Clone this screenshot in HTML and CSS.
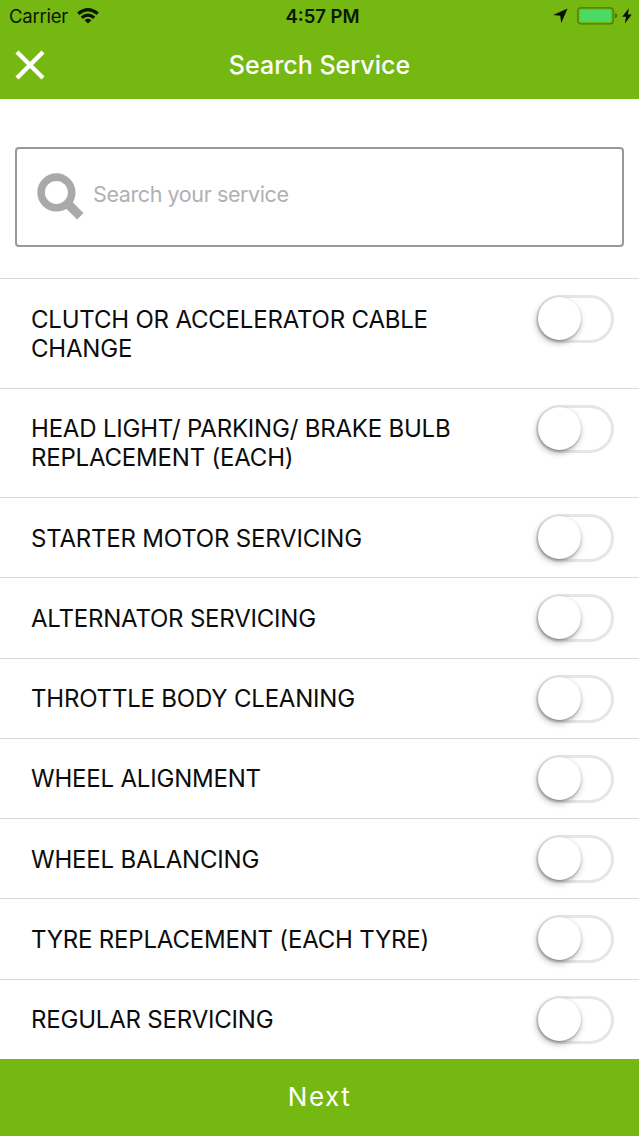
FILE: index.html
```
<!DOCTYPE html>
<html lang="en">
	<head>
		<meta charset="utf-8" />
		<meta name="viewport" content="width=device-width, initial-scale=1.0" />
		<title>Search Service</title>

		<link rel="stylesheet" href="styles.css">
	</head>

	<body>
		<header class="top">
			<div class="status">
				<div class="status-left">
					<span class="carrier">Carrier</span>
					<svg class="wifi" width="22" height="16" viewBox="0 0 22 16">
						<g fill="none" stroke="#0b1600" stroke-width="3.2">
							<path d="M1.2 5.8 Q11 -2.4 20.8 5.8" />
							<path d="M4.8 9.7 Q11 4.5 17.2 9.7" />
						</g>
						<path fill="#0b1600" d="M7.6 12.2 Q11 9.3 14.4 12.2 L11 15.6 Z" />
					</svg>
				</div>
				<span class="time">4:57 PM</span>
				<div class="status-right">
					<svg width="15" height="16" viewBox="0 0 15 16">
						<path fill="#081000" d="M14.6 .6 L8.2 15 L7.3 7.8 L.2 7 Z" />
					</svg>
					<svg class="battery" width="41" height="18" viewBox="0 0 41 18">
						<rect x=".8" y=".8" width="35.4" height="16" rx="3" fill="none" stroke="#49770c" stroke-width="1.2" />
						<rect x="2.8" y="2.8" width="31.4" height="12" rx="1" fill="#4cd964" />
						<path fill="#49770c" d="M37.8 6 Q40.4 6.6 40.4 8.8 T37.8 11.6 Z" />
					</svg>
					<svg class="bolt" width="10" height="16" viewBox="0 0 10 16">
						<path fill="#081000" d="M6.8 .2 L.2 8.8 H4.1 L2.8 15.6 L9.8 6.4 H6 Z" />
					</svg>
				</div>
			</div>

			<div class="titlebar">
				<svg class="close" width="30" height="30" viewBox="0 0 30 30">
					<path d="M2 2 L28 28 M28 2 L2 28" stroke="#fff" stroke-width="4.4" />
				</svg>
				<h1>Search Service</h1>
			</div>
		</header>

		<div class="search">
			<svg class="glass" width="47" height="47" viewBox="0 0 47 47">
				<circle cx="19.4" cy="19.4" r="15.3" fill="none" stroke="#a9a9a9" stroke-width="7.6" />
				<path d="M29 29 L43.3 43.3" stroke="#a9a9a9" stroke-width="9" />
			</svg>
			<span class="placeholder">Search your service</span>
		</div>

		<ul class="services">
			<li><span class="name">CLUTCH OR ACCELERATOR CABLE CHANGE</span><span class="switch"></span></li>
			<li><span class="name">HEAD LIGHT/ PARKING/ BRAKE BULB REPLACEMENT (EACH)</span><span class="switch"></span></li>
			<li><span class="name">STARTER MOTOR SERVICING</span><span class="switch"></span></li>
			<li><span class="name">ALTERNATOR SERVICING</span><span class="switch"></span></li>
			<li><span class="name">THROTTLE BODY CLEANING</span><span class="switch"></span></li>
			<li><span class="name">WHEEL ALIGNMENT</span><span class="switch"></span></li>
			<li><span class="name">WHEEL BALANCING</span><span class="switch"></span></li>
			<li><span class="name">TYRE REPLACEMENT (EACH TYRE)</span><span class="switch"></span></li>
			<li><span class="name">REGULAR SERVICING</span><span class="switch"></span></li>
		</ul>

		<footer class="next">Next</footer>
	</body>
</html>
```
FILE: styles.css
```
* {
	box-sizing: border-box;
}

body {
	margin: 0;
	height: 1136px;
	display: flex;
	flex-direction: column;
	overflow: hidden;

	background: #fff;
	color: #0c0c0c;
	font-family: Inter, "Liberation Sans", sans-serif;
}

svg {
	display: block;
	flex: none;
}



/**
 * Green header with the status bar and the title
 */
.top {
	flex: none;
	height: 98.5px;
	background: #74b811;
}

.status {
	display: grid;
	grid-template-columns: 1fr auto 1fr;
	height: 32px;
	padding: 0 7px 0 9px;
	align-items: center;

	color: #0b1600;
	font-size: 18.5px;
}

.status-left,
.status-right {
	display: flex;
	align-items: center;
}

.status-right {
	justify-content: flex-end;
}

.carrier {
	letter-spacing: -.25px;
}

.wifi {
	margin-left: 9px;
	margin-top: -1px;
}

.time {
	padding-left: 4px;
	font-weight: 600;
}

.battery {
	margin-left: 9px;
}

.bolt {
	margin-left: 4px;
}

.titlebar {
	display: grid;
	grid-template-columns: 30px 1fr 30px;
	height: 66px;
	padding: 0 15px;
	align-items: center;
}

.titlebar h1 {
	margin: 0;
	color: #fff;
	font-size: 25px;
	font-weight: 500;
	text-align: center;
}



/**
 * Search box
 */
.search {
	flex: none;
	display: flex;
	align-items: center;
	height: 100px;
	margin: 48.5px 15px 31px;
	padding: 0 20px;

	border: 2px solid #98999c;
	border-radius: 4px;
}

.glass {
	margin-top: -2px;
}

.placeholder {
	margin: -7px 0 0 9px;
	color: #b0b0b3;
	font-size: 21.5px;
	font-weight: 400;
	letter-spacing: -.4px;
}



/**
 * List of services, each with its switch
 */
.services {
	flex: 1;
	min-height: 0;
	margin: 0;
	padding: 0;
	overflow: hidden;
	list-style: none;
}

.services li {
	display: flex;
	justify-content: space-between;
	padding: 25.5px 25px 24.5px 31px;
	border-top: 1px solid #d9d9dc;
}

.name {
	width: 440px;
	font-size: 24px;
	letter-spacing: -.2px;
	line-height: 29.25px;
}

.switch {
	flex: none;
	width: 78px;
	height: 48px;
	margin: -9.5px 0;
	padding: 2px;

	border: 3px solid #e6e6e8;
	border-radius: 24px;
}

.switch::before {
	content: "";
	display: block;
	width: 43px;
	height: 43px;
	margin: -3px 0 0 -3px;

	border-radius: 50%;
	background: #fff;
	box-shadow: -1px 3px 6px rgba(0, 0, 0, .3), 0 1px 2px rgba(0, 0, 0, .25);
}



.next {
	flex: none;
	height: 77px;
	background: #74b811;
	color: #fff;
	font-size: 26px;
	letter-spacing: 1.5px;
	line-height: 76px;
	text-align: center;
}
```
